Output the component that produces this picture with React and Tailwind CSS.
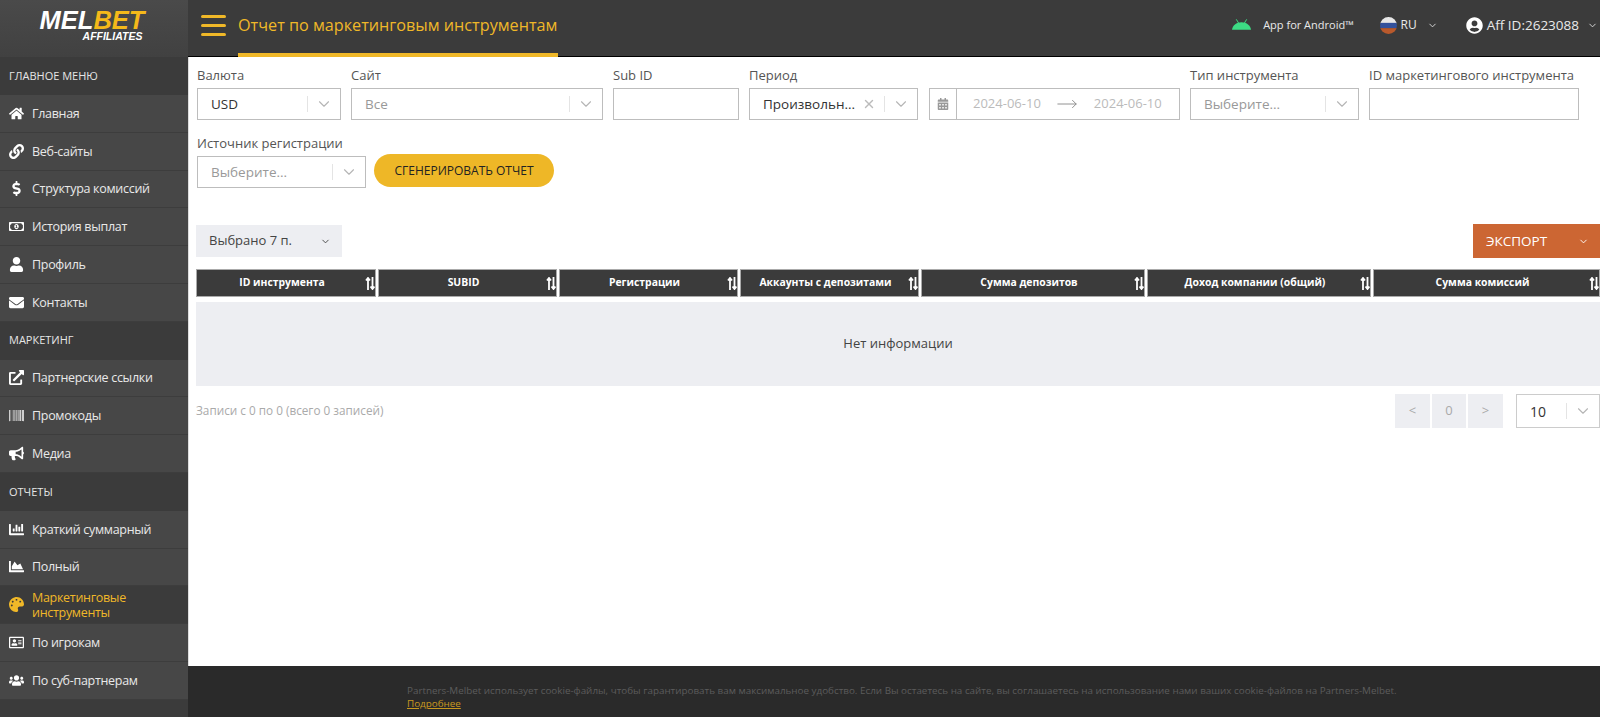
import React from 'react';
import { ChevronDown, X, MoveRight } from 'lucide-react';
import {
  FaHome, FaLink, FaDollarSign, FaRegMoneyBillAlt, FaUser, FaEnvelope, FaExternalLinkAlt, FaBarcode,
  FaBullhorn, FaChartBar, FaChartArea, FaPalette, FaRegAddressCard, FaUsers, FaUserCircle, FaCalendarAlt,
} from 'react-icons/fa';

const menu = [
  { heading: 'Главное меню' },
  { label: 'Главная', icon: FaHome },
  { label: 'Веб-сайты', icon: FaLink },
  { label: 'Структура комиссий', icon: FaDollarSign },
  { label: 'История выплат', icon: FaRegMoneyBillAlt },
  { label: 'Профиль', icon: FaUser },
  { label: 'Контакты', icon: FaEnvelope },
  { heading: 'Маркетинг' },
  { label: 'Партнерские ссылки', icon: FaExternalLinkAlt },
  { label: 'Промокоды', icon: FaBarcode },
  { label: 'Медиа', icon: FaBullhorn },
  { heading: 'Отчеты' },
  { label: 'Краткий суммарный', icon: FaChartBar },
  { label: 'Полный', icon: FaChartArea },
  { label: 'Маркетинговые инструменты', icon: FaPalette, active: true },
  { label: 'По игрокам', icon: FaRegAddressCard },
  { label: 'По суб-партнерам', icon: FaUsers },
];

const columns = [
  { title: 'ID инструмента', width: 'w-[180px]' },
  { title: 'SUBID', width: 'w-[179px]' },
  { title: 'Регистрации', width: 'w-[179px]' },
  { title: 'Аккаунты с депозитами', width: 'w-[179px]' },
  { title: 'Сумма депозитов', width: 'w-[224px]' },
  { title: 'Доход компании (общий)', width: 'w-[224px]' },
  { title: 'Сумма комиссий', width: 'w-[227px]' },
];

function SortIcon() {
  return (
    <svg width="10" height="13" viewBox="0 0 10 13" fill="none" stroke="currentColor" strokeWidth="1.8">
      <path d="M3 13V1.5M1 3.5 3 1l2 2.5" />
      <path d="M7.5 0v11.5M5.5 9.5l2 2.5 2-2.5" />
    </svg>
  );
}

function Field({ label, width, children }) {
  return (
    <div className={`flex flex-col gap-[3px] ${width}`}>
      <label className="h-5 text-[13px] leading-5 text-[#555] whitespace-nowrap">{label}</label>
      {children}
    </div>
  );
}

function SelectBox({ value, placeholder, clearable }) {
  return (
    <div className="flex h-8 items-center border border-[#bdbdbd] bg-white pl-[13px] text-[13.5px]">
      <span className={`min-w-0 flex-1 truncate ${placeholder ? 'text-[#999]' : 'text-[#333]'}`}>{placeholder || value}</span>
      {clearable && <X size={14} strokeWidth={2.5} className="mr-2 text-[#bbb]" />}
      <span className="h-[16px] w-px bg-[#e4e4e4]" />
      <ChevronDown size={18} strokeWidth={1.5} className="mx-[7px] text-[#b5b5b5]" />
    </div>
  );
}

function TextBox() {
  return <div className="h-8 border border-[#bdbdbd] bg-white" />;
}

function Sidebar() {
  return (
    <aside className="flex w-[188px] shrink-0 flex-col bg-[#3b3b3b]">
      <div className="flex h-[57px] flex-col items-center bg-gradient-to-b from-[#4a4a4a] to-[#414141] pt-[11px] pr-[4px]">
        <div className="h-[18px] text-[25.5px] leading-[18px] font-black italic text-white font-['Liberation_Sans',sans-serif]">
          MEL<span className="text-[#f5b91a]">BET</span>
        </div>
        <div className="ml-[41px] mt-[3px] text-[10.5px] leading-[8px] font-black italic text-white font-['Liberation_Sans',sans-serif]">AFFILIATES</div>
      </div>
      {menu.map((item) => {
        if (item.heading) {
          return (
            <div key={item.heading} className="flex h-[38px] items-center bg-[#3b3b3b] pl-[9px] text-[11px] uppercase text-[#e6e6e6]">
              {item.heading}
            </div>
          );
        }
        const Icon = item.icon;
        return (
          <div
            key={item.label}
            className={`flex h-[37.75px] items-center border-b border-[#3d3d3d] pl-[9px] text-[12.5px] tracking-[-0.3px] ${item.active ? 'bg-[#3b3b3b] text-[#f0b828]' : 'bg-[#474747] text-[#e9e9e9]'}`}
          >
            <span className="flex w-[14px] justify-center"><Icon size={15} className={`shrink-0 ${item.active ? 'text-[#f0b828]' : 'text-white'}`} /></span>
            <span className="ml-[9px] leading-[15px]">{item.label}</span>
          </div>
        );
      })}
    </aside>
  );
}

function Header() {
  return (
    <header className="flex h-[57px] shrink-0 items-center border-b border-black bg-[#3b3b3b]">
      <div className="mb-[5px] ml-[13px] flex w-[25px] flex-col gap-[6px]">
        <span className="h-[3px] rounded bg-[#f0b828]" />
        <span className="h-[3px] rounded bg-[#f0b828]" />
        <span className="h-[3px] rounded bg-[#f0b828]" />
      </div>
      <div className="relative ml-[12px] flex h-full w-[320px] items-center pb-[6px] text-[16.2px] whitespace-nowrap text-[#f0b828]">
        Отчет по маркетинговым инструментам
        <span className="absolute right-0 -bottom-px left-0 h-[4px] bg-[#f0b828]" />
      </div>
      <div className="ml-auto flex items-center pb-[6px] text-white">
        <svg width="19" height="12" viewBox="0 0 20 12" fill="#3ddc84">
          <path d="M0 11C.5 6.5 4.5 3 10 3s9.5 3.5 10 8z" />
          <path d="M4.5 0 7 4M15.5 0 13 4" stroke="#3ddc84" />
        </svg>
        <span className="ml-[12px] text-[11px] text-[#e9e9e9]">App for Android™</span>
        <svg width="17" height="17" viewBox="0 0 16 16" className="ml-[26px]">
          <defs><clipPath id="flag"><circle cx="8" cy="8" r="8" /></clipPath></defs>
          <g clipPath="url(#flag)">
            <rect width="16" height="6" fill="#e8e8e8" />
            <rect y="5.5" width="16" height="5" fill="#33519c" />
            <rect y="10.5" width="16" height="6" fill="#b8592c" />
          </g>
        </svg>
        <span className="ml-[4px] text-[12px] text-[#e9e9e9]">RU</span>
        <ChevronDown size={11} className="ml-[10px] text-[#ddd]" />
        <FaUserCircle size={17} className="ml-[28px]" />
        <span className="ml-[4px] text-[13.5px] text-[#e9e9e9]">Aff ID:2623088</span>
        <ChevronDown size={11} className="ml-[8px] mr-[2px] text-[#ddd]" />
      </div>
    </header>
  );
}

function Filters() {
  return (
    <div className="flex flex-wrap items-end gap-x-2.5 gap-y-[13px] pt-[8px]">
      <Field label="Валюта" width="ml-px w-[144px]"><SelectBox value="USD" /></Field>
      <Field label="Сайт" width="w-[252px]"><SelectBox placeholder="Все" /></Field>
      <Field label="Sub ID" width="w-[126px]"><TextBox /></Field>
      <Field label="Период" width="mr-px w-[169px]"><SelectBox value="Произвольн..." clearable /></Field>
      <div className="flex h-8 w-[251px] items-center border border-[#bdbdbd] text-[13px] text-[#bbb]">
        <span className="flex h-full w-[27px] items-center justify-center border-r border-[#bdbdbd]">
          <FaCalendarAlt size={12} className="text-[#999]" />
        </span>
        <span className="ml-[16px]">2024-06-10</span>
        <MoveRight size={22} strokeWidth={1} className="ml-[15px] text-[#888]" />
        <span className="ml-[16px]">2024-06-10</span>
      </div>
      <Field label="Тип инструмента" width="w-[169px]"><SelectBox placeholder="Выберите..." /></Field>
      <Field label="ID маркетингового инструмента" width="w-[210px]"><TextBox /></Field>
      <Field label="Источник регистрации" width="ml-px w-[169px]"><SelectBox placeholder="Выберите..." /></Field>
      <button className="ml-[-2px] mb-px h-[33px] w-[180px] rounded-full bg-[#eeb727] text-[12px] uppercase text-[#222]">
        Сгенерировать отчет
      </button>
    </div>
  );
}

function ReportTable() {
  return (
    <div className="mt-[11px]">
      <div className="flex gap-[2px]">
        {columns.map((col) => (
          <div
            key={col.title}
            className={`relative flex h-[28px] shrink-0 items-center justify-center border border-[#aaa] bg-[#3b3b3b] pr-[8px] text-[10.4px] font-bold text-white ${col.width}`}
          >
            {col.title}
            <span className="absolute top-[7px] right-0"><SortIcon /></span>
          </div>
        ))}
      </div>
      <div className="mt-[5px] flex h-[84px] items-center justify-center bg-[#edeef2] text-[13px] text-[#444]">
        Нет информации
      </div>
    </div>
  );
}

function Pagination() {
  return (
    <div className="mt-2 flex items-center justify-between">
      <span className="text-[11.75px] text-[#aaa]">Записи с 0 по 0 (всего 0 записей)</span>
      <div className="flex items-center">
        <div className="flex gap-[2px] text-[13px] text-[#aaa]">
          <span className="flex h-[34px] w-[35px] items-center justify-center bg-[#edeef2]">&lt;</span>
          <span className="flex h-[34px] w-[34px] items-center justify-center bg-[#edeef2]">0</span>
          <span className="flex h-[34px] w-[35px] items-center justify-center bg-[#edeef2]">&gt;</span>
        </div>
        <div className="ml-[13px] flex h-[34px] w-[84px] items-center border border-[#ccc] pl-[13px] text-[14px] text-[#333]">
          <span className="flex-1">10</span>
          <span className="h-[16px] w-px bg-[#e4e4e4]" />
          <ChevronDown size={18} strokeWidth={1.5} className="mx-[7px] text-[#b5b5b5]" />
        </div>
      </div>
    </div>
  );
}

export default function App() {
  return (
    <div className="flex h-[717px] overflow-hidden bg-white font-['Open_Sans',sans-serif]">
      <Sidebar />
      <main className="flex min-w-0 flex-1 flex-col">
        <Header />
        <div className="flex-1 border-l border-[#ddd] pl-[7px]">
          <Filters />
          <div className="mt-[36px] flex items-center justify-between">
            <div className="flex h-8 w-[146px] items-center bg-[#edeef2] pl-[13px] text-[13px] text-[#444]">
              Выбрано 7 п.
              <ChevronDown size={11} className="ml-[28px]" />
            </div>
            <div className="flex h-[34px] w-[127px] items-center bg-[#cc6633] pl-[13px] text-[13.5px] uppercase text-white">
              Экспорт
              <ChevronDown size={11} className="ml-auto mr-[11px]" />
            </div>
          </div>
          <ReportTable />
          <Pagination />
        </div>
        <footer className="h-[51px] shrink-0 bg-[#2a2a2a] pt-[18px] pl-[219px] text-[9.85px] leading-[13px] text-[#5c5c5c]">
          <p>Partners-Melbet использует cookie-файлы, чтобы гарантировать вам максимальное удобство. Если Вы остаетесь на сайте, вы соглашаетесь на использование нами ваших cookie-файлов на Partners-Melbet.</p>
          <a className="text-[#c8991f] underline">Подробнее</a>
        </footer>
      </main>
    </div>
  );
}
